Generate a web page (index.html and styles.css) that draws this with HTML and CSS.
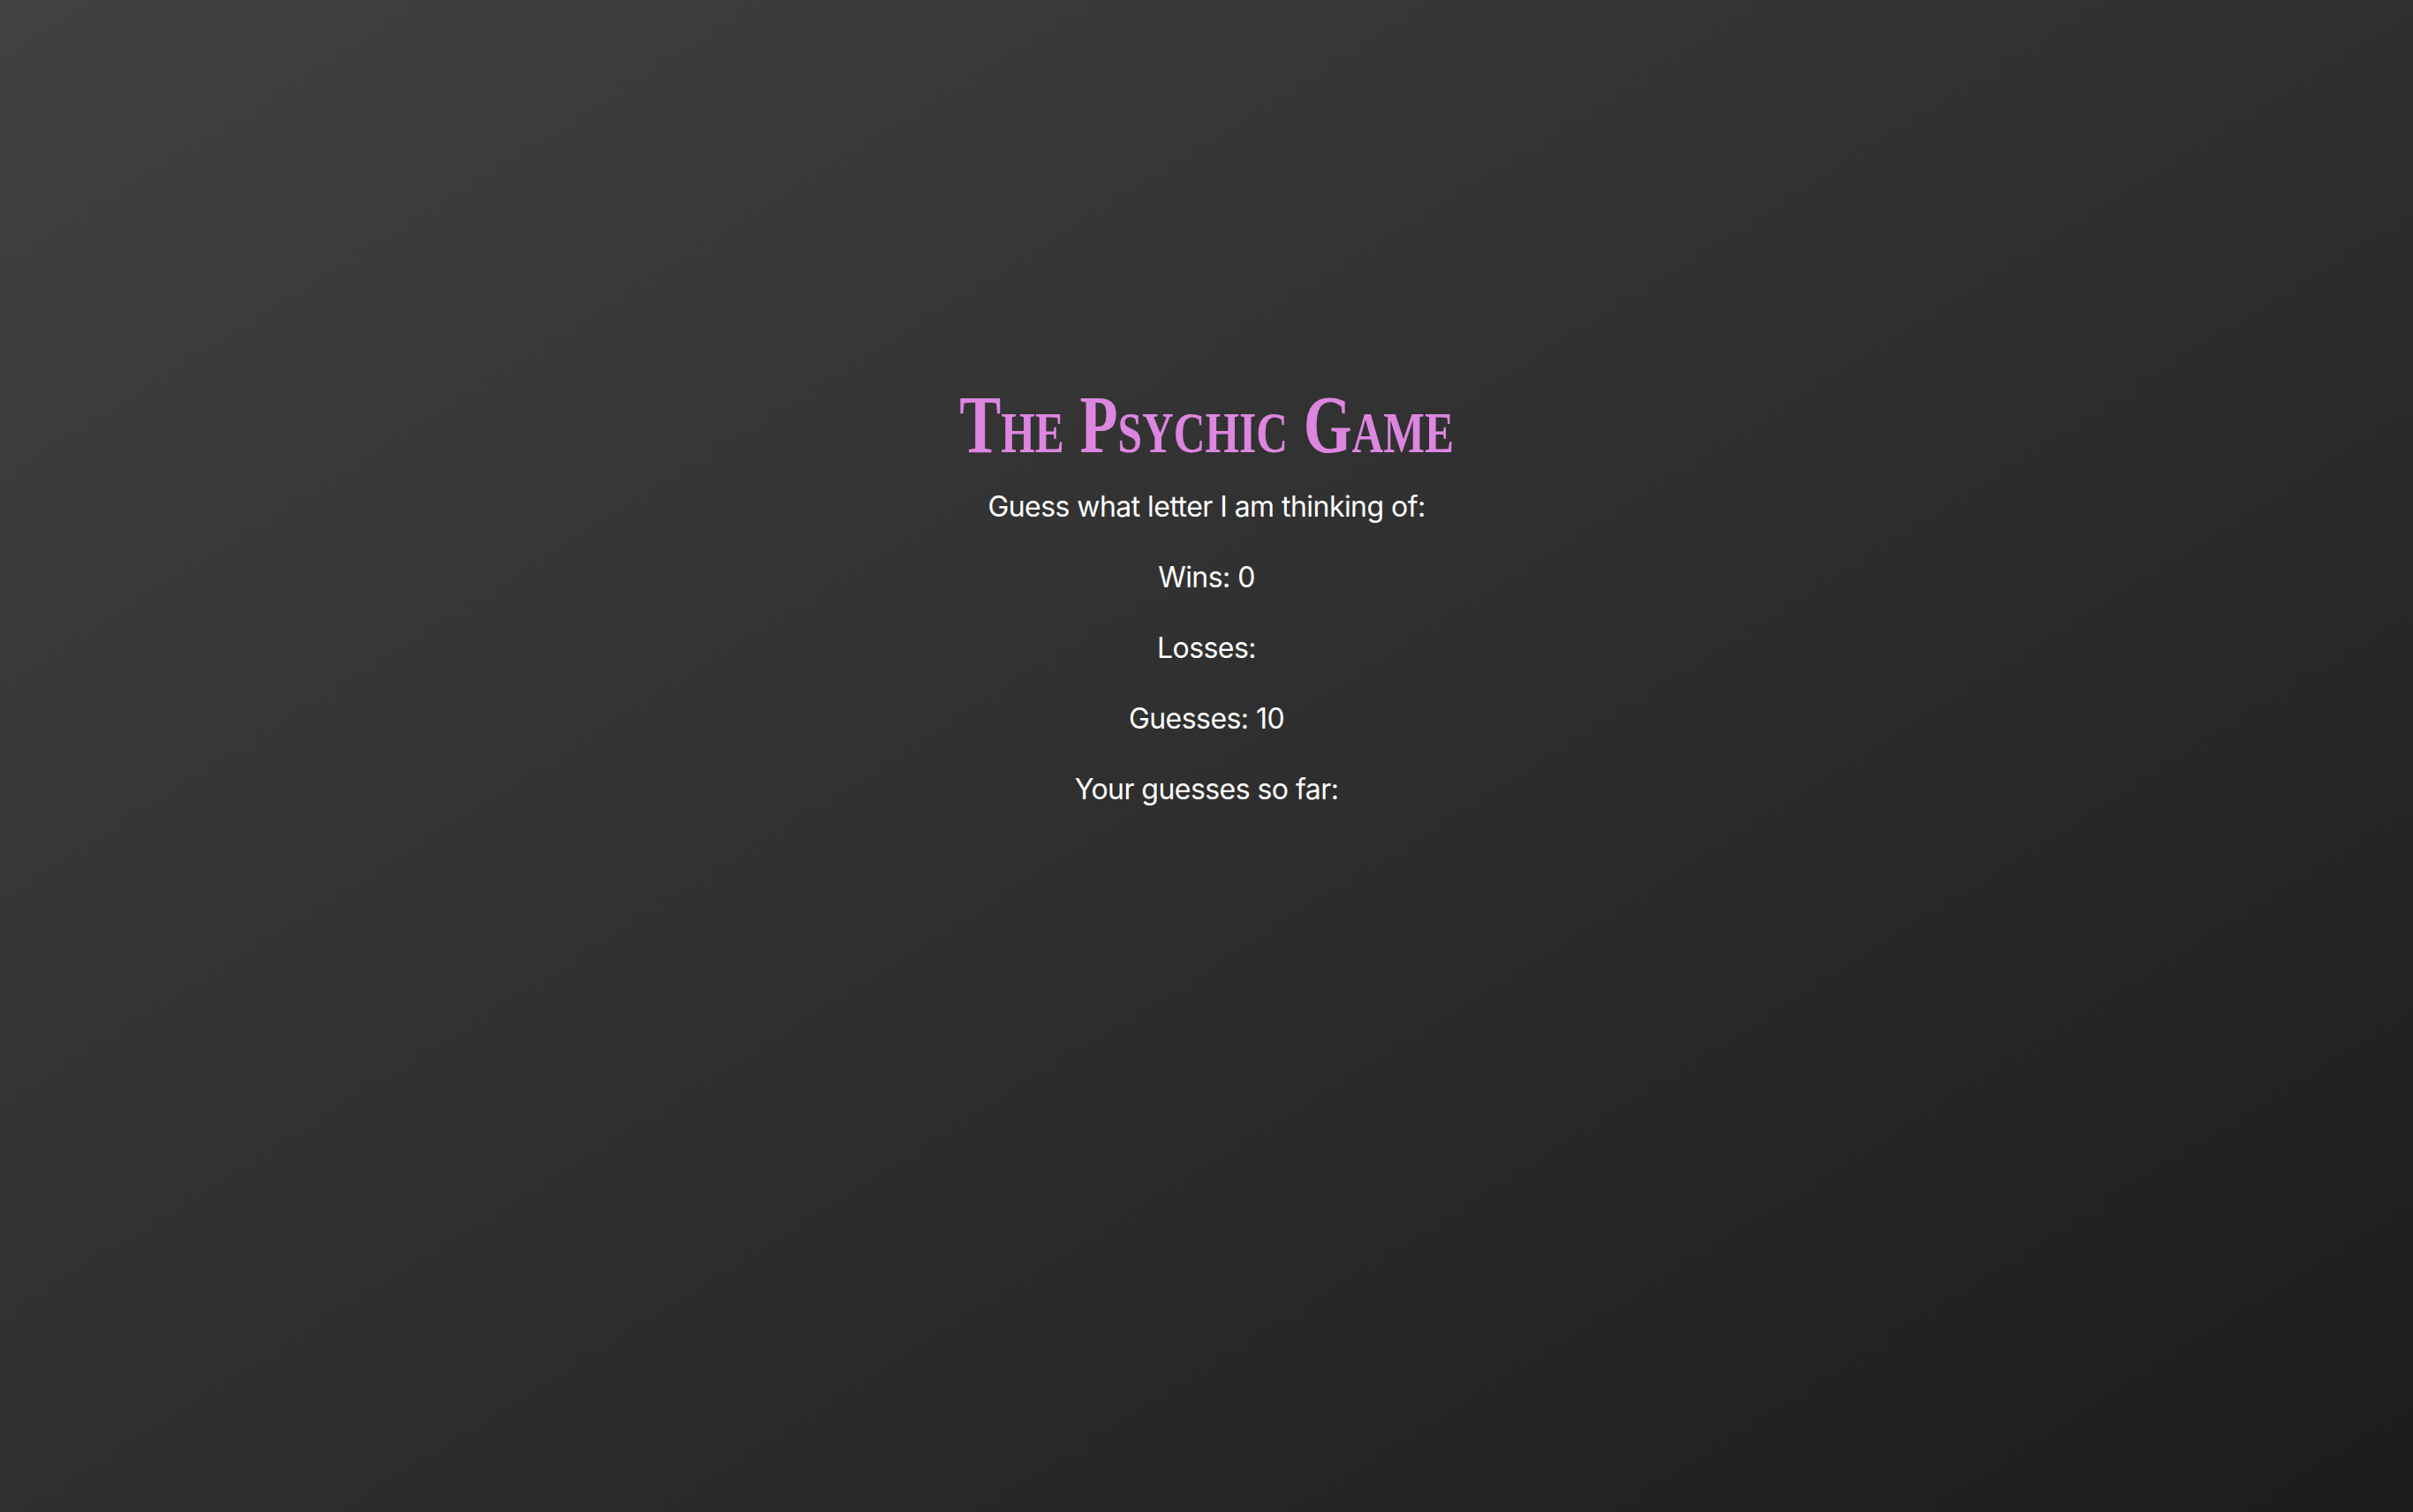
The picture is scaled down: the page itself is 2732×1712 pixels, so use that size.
FILE: index.html
```html
<!DOCTYPE html>
<html lang="en">
<head>
<meta charset="utf-8">
<title>The Psychic Game</title>
<link rel="stylesheet" href="styles.css">
</head>
<body>
<main class="game">
  <h1 class="title"><span class="title-text">The Psychic Game</span></h1>
  <p class="line">Guess what letter I am thinking of:</p>
  <p class="line">Wins: 0</p>
  <p class="line">Losses:</p>
  <p class="line">Guesses: 10</p>
  <p class="line">Your guesses so far:</p>
</main>
</body>
</html>
```

FILE: styles.css
```css
html, body {
  margin: 0;
  padding: 0;
}
body {
  min-height: 100vh;
  background: linear-gradient(to bottom right, #414141 0%, #2f2f2f 50%, #1c1c1c 100%);
  color: #ffffff;
  font-family: Inter, "Noto Sans", "Liberation Sans", sans-serif;
}
.game {
  padding-top: 430px;
  text-align: center;
}
.title {
  margin: 0 0 20px 0;
  font-family: "Liberation Serif", serif;
  font-weight: bold;
  font-size: 94px;
  line-height: 100px;
  color: #dc86e0;
  font-variant: small-caps;
}
.title-text {
  display: inline-block;
  transform: scaleX(0.75);
  transform-origin: center;
}
.line {
  margin: 0 0 32px 0;
  font-size: 32px;
  line-height: 48px;
  letter-spacing: -0.55px;
}
```
